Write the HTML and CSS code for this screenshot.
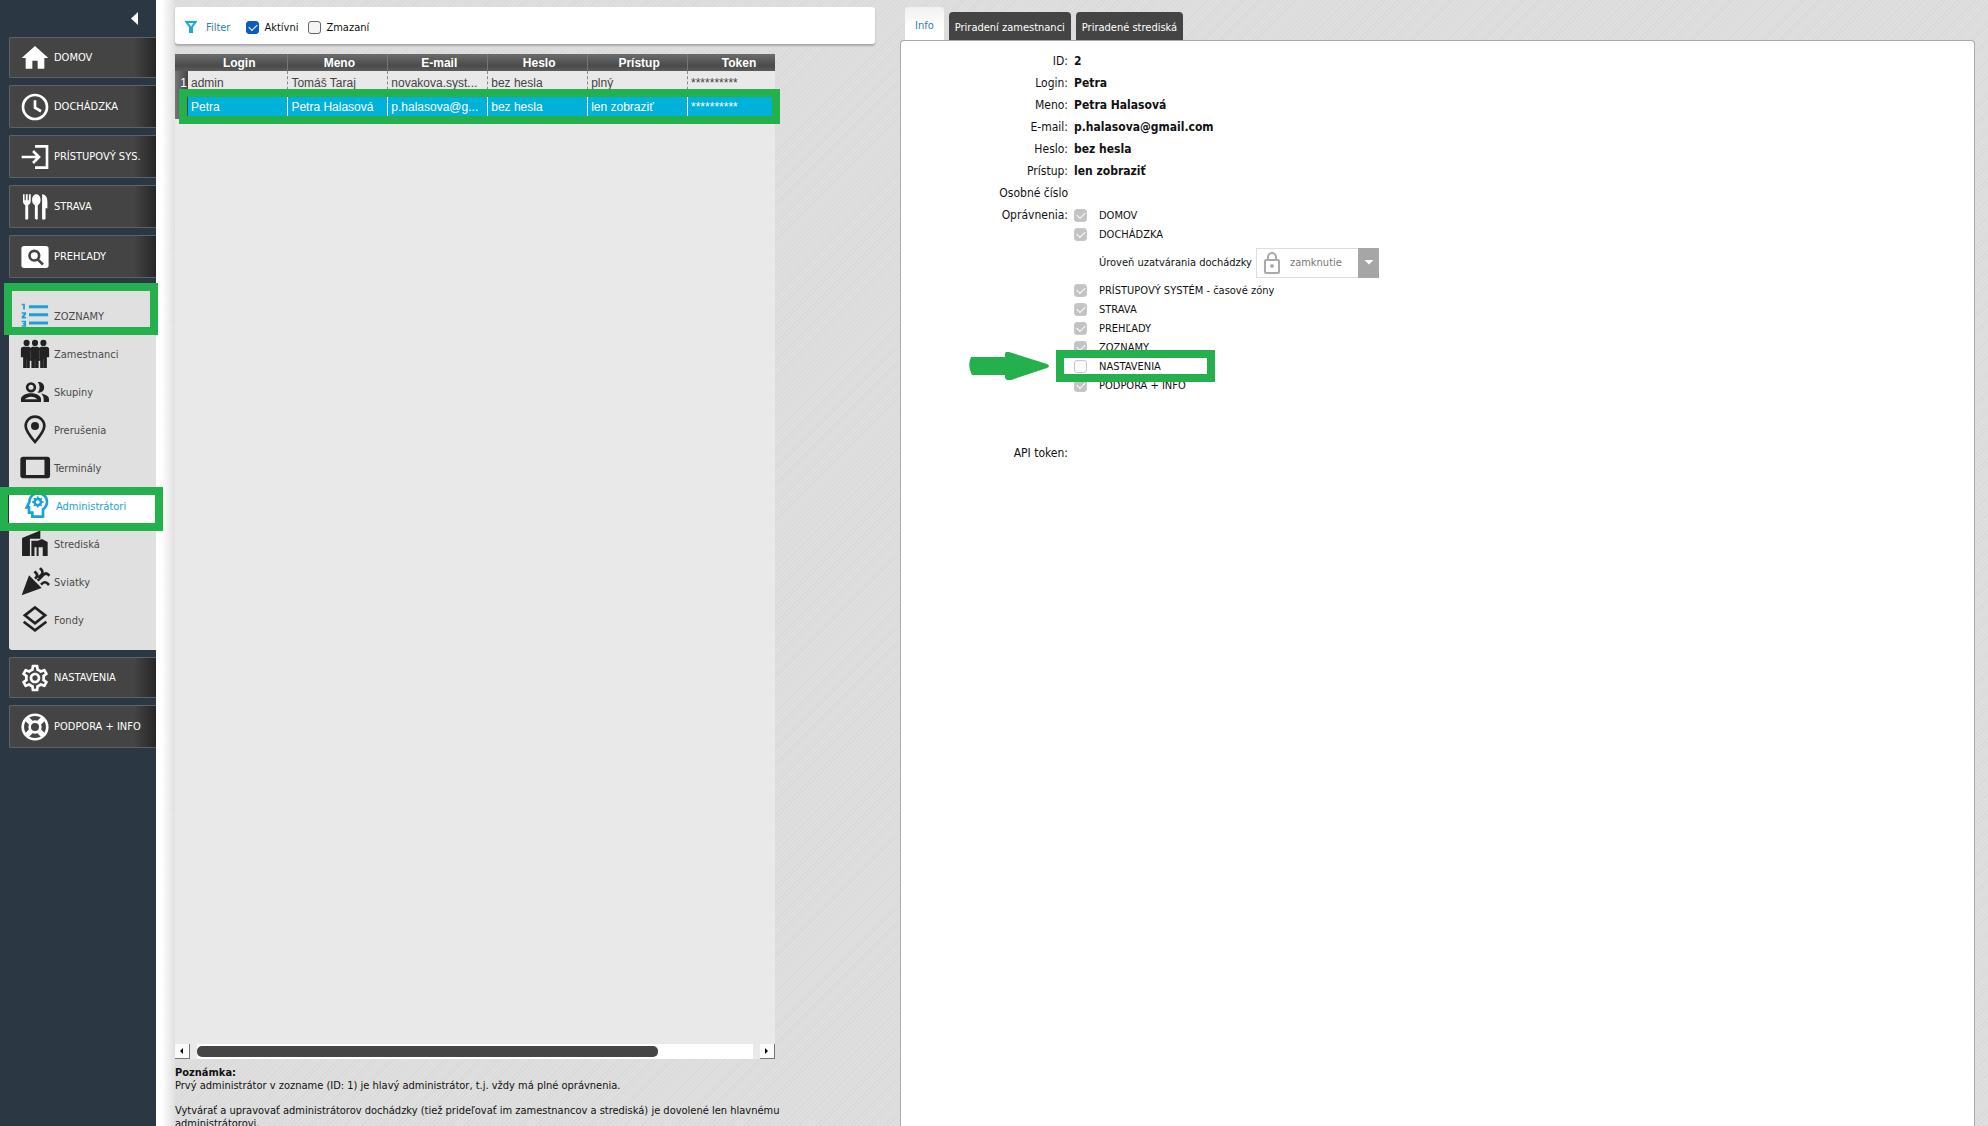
FILE: index.html
```html
<!DOCTYPE html>
<html lang="sk">
<head>
<meta charset="utf-8">
<meta name="viewport" content="width=device-width, initial-scale=1">
<title>Administrátori</title>
<link rel="stylesheet" href="styles.css">
</head>
<body>
<nav class="sidebar">
  <button class="collapse" type="button" aria-label="Skryť menu"></button>
  <a class="nav-item short" href="#"><svg class="icon" viewBox="0 0 24 24"><path d="M10 20v-6h4v6h5v-8h3L12 3 2 12h3v8z"/></svg>DOMOV</a>
  <a class="nav-item" href="#"><svg class="icon line" viewBox="0 0 24 24"><circle cx="12" cy="12" r="9"/><path d="M12 7v5.500l4.500 2.700"/></svg>DOCHÁDZKA</a>
  <a class="nav-item" href="#"><svg class="icon line" viewBox="0 0 24 24"><path d="M12 4h9v16h-9M2 12h12M10.500 7.500 15 12l-4.500 4.500"/></svg>PRÍSTUPOVÝ SYS.</a>
  <a class="nav-item" href="#"><svg class="icon" viewBox="0 0 24 24"><path d="M3 2.500h1.200V7h.9V2.500h1.400V7h.9V2.500h1.400V7.500c0 1.700-.8 2.600-1.900 3v10.200c0 1.200-2.200 1.200-2.200 0V10.500C3.700 10.100 3 9.200 3 7.500zM13 2.500c1.900 0 3.200 1.900 3.200 4.300 0 1.900-.8 3.200-2.100 3.800v10.100c0 1.200-2.200 1.200-2.200 0V10.600c-1.300-.6-2.100-1.900-2.100-3.800 0-2.400 1.300-4.300 3.200-4.300zM17.300 2.500c2.400 0 4 2.100 4 5.500V13h-1.400v7.700c0 1.200-2.600 1.200-2.600 0z"/></svg>STRAVA</a>
  <a class="nav-item" href="#"><svg class="icon" viewBox="0 0 24 24"><rect x="1.800" y="3.800" width="20.400" height="16.400" rx="2"/><g class="cut"><circle cx="11.500" cy="11" r="3.600"/><path d="m14 13.800 4 3.800"/></g></svg>PREHĽADY</a>

  <div class="nav-group">
    <a class="group-head" href="#"><svg class="icon accent" viewBox="0 0 24 24"><path d="M2 2.800h2.400v4.400H3.100V4H2zM2 9.200h3.300v1.500L3.800 12.600h1.500v1.200H2v-1.500L3.700 10.400H2zM2 15.600h3.300v4.400H2v-1.100h1.900v-.6h-1V17.200h1v-.5H2zM7.500 4h14.300v2.200H7.500zM7.500 10h14.300v2.200H7.500zM7.500 16.200h14.300v2.200H7.500z"/></svg>ZOZNAMY<span class="mark mark-group"></span></a>
    <a class="sub-item" href="#"><svg class="icon" viewBox="0 0 24 24"><circle cx="5.700" cy="3.700" r="2.300"/><circle cx="12" cy="3.700" r="2.300"/><circle cx="18.300" cy="3.700" r="2.300"/><path d="M3.300 6.500h4.200l1.200.8 1.200-.8h4.200l1.200.8 1.200-.8h4.200c1.100 0 1.900.8 1.900 1.900v6.100h-1.700v8h-5v-5.500h-1.200v5.500H9.300V17H8.100v5.500h-5v-8H1.400V8.400c0-1.100.8-1.900 1.900-1.900z"/><path class="gap-line" d="M8.700 9v7M15.300 9v7M5.700 16v6.500M12 16v6.500M18.300 16v6.500"/></svg>Zamestnanci</a>
    <a class="sub-item" href="#"><svg class="icon" viewBox="0 0 24 24"><circle class="ring" cx="9" cy="8.500" r="2.900"/><path d="M9 13c-2.700 0-7.500 1.300-7.500 4.300V19.500h15v-2.200C16.500 14.300 11.700 13 9 13zm-4.800 4.500C5 16.600 7 15.500 9 15.500s4 1 4.800 2zM14 4.600c2.300-.7 4.900 1 4.900 3.900s-2.600 4.600-4.900 3.900c1.900-2 1.900-5.800 0-7.800zM16.500 13.200c2.600.5 6 1.700 6 4.100v2.200h-4v-2.200c0-1.700-.8-3.100-2-4.100z"/></svg>Skupiny</a>
    <a class="sub-item" href="#"><svg class="icon" viewBox="0 0 24 24"><path class="ring" d="M12 21c-4-4.700-7-8.500-7-12a7 7 0 0 1 14 0c0 3.500-3 7.300-7 12z"/><circle cx="12" cy="9" r="3"/></svg>Prerušenia</a>
    <a class="sub-item" href="#"><svg class="icon" viewBox="0 0 24 24"><path fill-rule="evenodd" d="M3 3.500h18.500c1.100 0 1.800.8 1.800 1.800v12.500c0 1-.7 1.800-1.800 1.800H3c-1.100 0-2-.8-2-1.800V5.300C1 4.300 1.900 3.500 3 3.500zm2.200 2.300v11.500h13.900V5.800z"/></svg>Terminály</a>
    <a class="sub-item active" href="#"><svg class="icon" viewBox="0 0 24 24"><path class="ring" d="M8.500 20v-3H6v-4H4.300l2-4a6.600 6.600 0 1 1 10.200 5.500V20z"/><circle class="ring" cx="12.600" cy="9" r="2.400"/><path class="ring teeth" d="M12.600 4.600v2M12.600 11.400v2M8.200 9h2M15 9h2M9.500 5.900l1.400 1.400M14.300 10.700l1.400 1.400M9.500 12.100l1.400-1.400M14.300 7.300l1.400-1.400"/></svg>Administrátori<span class="mark mark-active"></span></a>
    <a class="sub-item" href="#"><svg class="icon" viewBox="0 0 24 24"><path d="M2.300 21V7.500L16 1.800V8H8.200v13zM9.300 9.500h4.900l3-1.300 4.300 2.300V21h-3.700v-6.500h-3.100V21h-1.500v-6.500h-1.600V21H9.300z"/></svg>Strediská</a>
    <a class="sub-item" href="#"><svg class="icon" viewBox="0 0 24 24"><path d="m2 22 5.500-15L17 16.500z"/><path class="ring" d="M14 11l4.500-4.500c1-1 2.500-1 3.500 0l.8.800M16.500 14l.8-.8c1.200-1.200 3-1.200 4.200 0l1 1M12 9.500l.8-.8c1-1 1-2.500 0-3.500l-1.200-1.200M14.500 9l2.200-2.200c1.200-1.200 1.200-3 0-4.200l-1-1"/></svg>Sviatky</a>
    <a class="sub-item" href="#"><svg class="icon" viewBox="0 0 24 24"><path class="ring" d="m12 2.600 7.600 5.900L12 14.400 4.400 8.500zM3.500 13.300 12 19.800l8.500-6.500"/></svg>Fondy</a>
  </div>

  <a class="nav-item short" href="#"><svg class="icon" viewBox="0 0 24 24"><path d="M19.430 12.980c.04-.32.07-.64.07-.98 0-.34-.03-.66-.07-.98l2.110-1.650c.19-.15.24-.42.12-.64l-2-3.460c-.09-.16-.26-.25-.44-.25-.06 0-.12.010-.17.030l-2.490 1c-.52-.4-1.080-.73-1.690-.98l-.38-2.650C14.460 2.180 14.250 2 14 2h-4c-.25 0-.46.18-.49.42l-.38 2.650c-.61.25-1.170.59-1.690.98l-2.490-1c-.06-.02-.12-.03-.18-.03-.17 0-.34.09-.43.25l-2 3.460c-.13.22-.07.49.12.64l2.110 1.650c-.04.32-.07.65-.07.98 0 .33.03.66.07.98l-2.110 1.650c-.19.15-.24.42-.12.64l2 3.460c.09.16.26.25.44.25.06 0 .12-.01.17-.03l2.490-1c.52.4 1.080.73 1.690.98l.38 2.650c.03.24.24.42.49.42h4c.25 0 .46-.18.49-.42l.38-2.650c.61-.25 1.170-.59 1.690-.98l2.490 1c.06.02.12.03.18.03.17 0 .34-.09.43-.25l2-3.460c.12-.22.07-.49-.12-.64l-2.110-1.650zm-1.980-1.710c.04.31.05.52.05.73 0 .21-.02.43-.05.73l-.14 1.130.89.7 1.080.84-.7 1.210-1.270-.51-1.040-.42-.9.68c-.43.32-.84.56-1.250.73l-1.060.43-.16 1.130-.2 1.350h-1.400l-.19-1.350-.16-1.130-1.060-.43c-.43-.18-.83-.41-1.230-.71l-.91-.7-1.060.43-1.270.51-.7-1.210 1.080-.84.89-.7-.14-1.130c-.03-.31-.05-.54-.05-.74s.02-.43.05-.73l.14-1.130-.89-.7-1.080-.84.7-1.210 1.270.51 1.040.42.9-.68c.43-.32.84-.56 1.250-.73l1.060-.43.16-1.130.2-1.350h1.390l.19 1.350.16 1.130 1.060.43c.43.18.83.41 1.230.71l.91.7 1.060-.43 1.270-.51.7 1.210-1.070.85-.89.7.14 1.130zM12 8c-2.210 0-4 1.790-4 4s1.790 4 4 4 4-1.790 4-4-1.790-4-4-4zm0 6c-1.100 0-2-.9-2-2s.9-2 2-2 2 .9 2 2-.9 2-2 2z"/></svg>NASTAVENIA</a>
  <a class="nav-item" href="#"><svg class="icon line" viewBox="0 0 24 24"><circle cx="12" cy="12" r="9.200"/><circle cx="12" cy="12" r="4"/><path class="spokes" d="m5.800 5.800 3 3M18.200 5.800l-3 3M5.800 18.200l3-3M18.200 18.200l-3-3"/></svg>PODPORA + INFO</a>
</nav>

<main class="content">
  <section class="list-pane">
    <form class="filter">
      <a class="filter-link" href="#"><svg class="funnel" viewBox="0 0 12 12"><path d="M1.500 1h9L7 5.800V11H5V5.800z"/></svg>Filter</a>
      <label><input class="check" type="checkbox" checked>Aktívni</label>
      <label><input class="check" type="checkbox">Zmazaní</label>
    </form>
    <div class="grid-wrap">
      <div class="grid-scroll">
        <table class="grid">
          <thead><tr><th class="num"></th><th>Login</th><th>Meno</th><th>E-mail</th><th>Heslo</th><th>Prístup</th><th>Token</th></tr></thead>
          <tbody>
            <tr><td class="num">1</td><td>admin</td><td>Tomáš Taraj</td><td>novakova.syst...</td><td>bez hesla</td><td>plný</td><td>**********</td></tr>
            <tr class="selected"><td class="num"></td><td>Petra</td><td>Petra Halasová</td><td>p.halasova@g...</td><td>bez hesla</td><td>len zobraziť</td><td>**********</td></tr>
          </tbody>
        </table>
      </div>
      <span class="mark mark-row"></span>
      <div class="scrollbar">
        <button type="button" class="arrow prev" aria-label="Doľava"></button>
        <div class="track"><div class="thumb"></div></div>
        <button type="button" class="arrow next" aria-label="Doprava"></button>
      </div>
    </div>
    <div class="note">
      <strong>Poznámka:</strong>
      <p>Prvý administrátor v zozname (ID: 1) je hlavý administrátor, t.j. vždy má plné oprávnenia.</p>
      <p>Vytvárať a upravovať administrátorov dochádzky (tiež prideľovať im zamestnancov a strediská) je dovolené len hlavnému administrátorovi.</p>
    </div>
  </section>

  <section class="detail-pane">
    <div class="tabs">
      <button type="button" class="tab current">Info</button>
      <button type="button" class="tab">Priradení zamestnanci</button>
      <button type="button" class="tab">Priradené strediská</button>
    </div>
    <div class="panel">
      <dl class="fields">
        <dt>ID:</dt><dd>2</dd>
        <dt>Login:</dt><dd>Petra</dd>
        <dt>Meno:</dt><dd>Petra Halasová</dd>
        <dt>E-mail:</dt><dd>p.halasova@gmail.com</dd>
        <dt>Heslo:</dt><dd>bez hesla</dd>
        <dt>Prístup:</dt><dd>len zobraziť</dd>
        <dt>Osobné číslo</dt><dd></dd>
        <dt>Oprávnenia:</dt>
        <dd class="rights">
          <label><input class="check" type="checkbox" checked disabled>DOMOV</label>
          <label><input class="check" type="checkbox" checked disabled>DOCHÁDZKA</label>
          <div class="level">
            <label for="level">Úroveň uzatvárania dochádzky</label>
            <div class="select-box">
              <select id="level" disabled><option>zamknutie</option></select>
              <svg class="lock" viewBox="0 0 16 22"><rect x="1" y="8" width="14" height="13" rx="1"/><path d="M4 8V5a4 4 0 0 1 8 0v3"/><circle cx="8" cy="14" r="1"/></svg>
              <span class="drop"></span>
            </div>
          </div>
          <label><input class="check" type="checkbox" checked disabled>PRÍSTUPOVÝ SYSTÉM - časové zóny</label>
          <label><input class="check" type="checkbox" checked disabled>STRAVA</label>
          <label><input class="check" type="checkbox" checked disabled>PREHĽADY</label>
          <label><input class="check" type="checkbox" checked disabled>ZOZNAMY</label>
          <label class="noted"><input class="check" type="checkbox" disabled>NASTAVENIA<svg class="pointer" viewBox="0 0 80 28"><path d="M2 5h34V2q0-3 4-2l38 12q4 2 0 4L42 28q-6 1-6-3v-2H3q-5-9-1-18z"/></svg></label>
          <label><input class="check" type="checkbox" checked disabled>PODPORA + INFO</label>
        </dd>
        <dt>API token:</dt><dd></dd>
      </dl>
    </div>
  </section>
</main>
</body>
</html>
```
FILE: styles.css
```css
*, *::before, *::after { box-sizing: border-box; }

:root {
  --mark: #24b04d;
  --accent: #1ba1d8;
  --ui: Tahoma, "DejaVu Sans Condensed", "Noto Sans", sans-serif;
}

body {
  margin: 0;
  height: 100vh;
  overflow: hidden;
  display: flex;
  font: 11px/13px var(--ui);
  color: #111;
}

a { color: inherit; text-decoration: none; }
button { font: inherit; border: 0; padding: 0; }

/* Sidebar */
.sidebar {
  flex: none;
  width: 156px;
  padding-left: 9px;
  background: #2b3743;
  display: flex;
  flex-direction: column;
  gap: 7px;
}

.collapse {
  align-self: flex-end;
  width: 7px;
  height: 13px;
  margin: 12px 18px 5px 0;
  background: #fff;
  clip-path: polygon(100% 0, 100% 100%, 0 50%);
}

.nav-item {
  display: flex;
  align-items: center;
  gap: 3px;
  height: 43px;
  padding-left: 9px;
  border: 1px solid #5c6267;
  border-right: 0;
  border-radius: 2px 0 0 2px;
  background: linear-gradient(90deg, #444 85%, #262626);
  color: #fff;
  white-space: nowrap;
}

.nav-item.short { height: 41px; }

.icon { flex: none; width: 32px; height: 32px; fill: currentColor; }
.line { fill: none; stroke: currentColor; stroke-width: 2; }
.spokes { stroke-width: 4; }
.cut { fill: none; stroke: #444; stroke-width: 2; }
.ring { fill: none; stroke: currentColor; stroke-width: 2; }
.teeth { stroke-width: 1; }
.gap-line { stroke: #777; stroke-width: 0.3; }

.nav-group {
  padding-bottom: 11px;
  background: #e0e0e0;
  border-radius: 3px 0 0 3px;
}

.group-head, .sub-item {
  position: relative;
  display: flex;
  align-items: center;
  gap: 3px;
  height: 38px;
  padding-left: 10px;
  color: #4a4a4a;
}

.group-head { height: 50px; padding-top: 12px; }
.sub-item .icon { color: #222; }
.icon.accent { color: var(--accent); }
.sub-item.active { padding-left: 12px; background: #fff; color: var(--accent); }
.sub-item.active .icon { color: var(--accent); }

.mark { position: absolute; border: 8px solid var(--mark); z-index: 2; }
.mark-group { left: -5px; right: -2px; top: -2px; bottom: 0; }
.mark-active { left: -9px; right: -7px; top: 0; bottom: -6px; }

/* Content */
.content {
  flex: 1;
  min-width: 0;
  display: flex;
  gap: 25px;
  padding: 7px 13px 0 19px;
  background:
    linear-gradient(90deg, #fff 6px, rgba(255, 255, 255, 0) 20px),
    repeating-linear-gradient(135deg, #dfdfdf 0 2px, #d9d9d9 2px 3px);
}

.list-pane {
  flex: none;
  width: 700px;
  display: flex;
  flex-direction: column;
}

.filter {
  flex: none;
  display: flex;
  align-items: center;
  gap: 10px;
  height: 37px;
  padding: 3px 10px 0;
  background: #fff;
  border-radius: 3px;
  box-shadow: 0 2px 2px #aaa;
}

.filter-link { display: flex; align-items: center; gap: 9px; margin-right: 6px; color: #2e7fa8; }
.funnel { width: 12px; height: 12px; fill: none; stroke: #18aad8; stroke-width: 2; }
.filter label { display: flex; align-items: center; gap: 5px; }

.check {
  appearance: none;
  flex: none;
  display: grid;
  place-items: center;
  width: 13px;
  height: 13px;
  margin: 0;
  border: 1px solid #666;
  border-radius: 3px;
  background: #f4f4f4;
}
.check:checked { background: #0a5db8; border-color: #0a5db8; }
.check:checked::before {
  content: "";
  width: 8px;
  height: 5px;
  border: solid #fff;
  border-width: 0 0 1px 1px;
  transform: translateY(-1px) rotate(-45deg);
}
.check:disabled { border-color: #c8c8c8; background: #fafafa; }
.check:checked:disabled { background: #c3c3c3; }

.grid-wrap {
  position: relative;
  flex: 1;
  width: 600px;
  margin-top: 10px;
  display: flex;
  flex-direction: column;
  background: #e9e9e9;
}

.grid-scroll { flex: 1; overflow: hidden; }

.grid {
  width: 613px;
  table-layout: fixed;
  border-collapse: collapse;
  font: 12px/14px "Liberation Sans", Arial, sans-serif;
  color: #444;
}
.grid th {
  height: 17px;
  padding: 0 0 0 3px;
  background: linear-gradient(#6c6c6c, #4a4a4a 70%, #5c5c5c);
  border-right: 1px solid #777;
  color: #fff;
}
.grid td {
  height: 24px;
  padding: 0 0 0 3px;
  border-left: 1px dashed #888;
  white-space: nowrap;
  overflow: hidden;
}
.grid .num { width: 13px; padding: 0 1px 0 0; border: 0; text-align: right; }
.grid td.num { background: linear-gradient(90deg, #777, #444); color: #fff; }
.grid td.num + td { border-left: 0; }
.grid .selected td:not(.num) { background: #00b1d9; border-left-color: #fff; color: #fff; }
.mark-row { left: 4px; right: -5px; top: 35px; height: 35px; }

.scrollbar { flex: none; display: flex; gap: 7px; height: 15px; }
.arrow { position: relative; width: 15px; background: #fafafa; border: solid #777; border-width: 0 1px 1px 0; }
.arrow::after { content: ""; position: absolute; left: 5px; top: 4px; width: 3px; height: 6px; background: #000; }
.prev::after { clip-path: polygon(100% 0, 100% 100%, 0 50%); }
.next::after { clip-path: polygon(0 0, 0 100%, 100% 50%); }
.track { flex: 1; background: #fff; padding: 2px 0; }
.thumb { width: 83%; height: 11px; border-radius: 5px; background: #454545; }

.note { flex: none; width: 620px; height: 67px; padding-top: 7px; }
.note p { margin: 0 0 12px; }

/* Detail */
.detail-pane { flex: 1; min-width: 0; display: flex; flex-direction: column; }

.tabs { flex: none; display: flex; align-items: flex-end; gap: 5px; height: 33px; padding-left: 5px; }
.tab {
  height: 28px;
  padding: 2px 6px 0;
  border-radius: 4px 4px 0 0;
  background: #444;
  color: #fff;
  white-space: nowrap;
}
.tab.current { height: 33px; padding: 4px 10px 0; background: linear-gradient(#f0f0f0, #fff 60%); color: #2e7fa8; }

.panel {
  flex: 1;
  padding-top: 9px;
  background: #fff;
  border: 1px solid #aaa;
  border-bottom: 0;
  border-radius: 4px 4px 0 0;
}

.fields {
  display: grid;
  grid-template-columns: 167px 1fr;
  column-gap: 6px;
  margin: 0;
  font-size: 12px;
  line-height: 22px;
}
.fields dt { text-align: right; }
.fields dd { margin: 0; font-weight: bold; }
.fields .rights { padding: 2px 0 47px; font-size: 11px; font-weight: normal; line-height: 19px; }
.rights > label { display: flex; align-items: center; gap: 12px; width: max-content; height: 19px; }
.level { display: flex; align-items: center; gap: 4px; height: 37px; padding-left: 25px; }

.select-box { position: relative; width: 123px; height: 30px; }
.select-box select {
  appearance: none;
  width: 100%;
  height: 100%;
  padding: 0 22px 0 33px;
  border: 1px solid #ddd;
  border-radius: 0;
  background: #fff;
  font: inherit;
  color: #777;
  opacity: 1;
}
.lock { position: absolute; left: 8px; top: 4px; width: 16px; height: 22px; fill: none; stroke: #aaa; stroke-width: 2; }
.drop { position: absolute; right: 0; top: 0; width: 21px; height: 100%; background: #a6a6a6; }
.drop::after {
  content: "";
  position: absolute;
  left: 6px;
  top: 12px;
  width: 10px;
  height: 5px;
  background: #fff;
  clip-path: polygon(0 0, 100% 0, 50% 100%);
}

.rights > .noted { position: relative; }
.noted::after {
  content: "";
  position: absolute;
  left: -18px;
  top: -7px;
  width: 159px;
  height: 32px;
  border: 8px solid var(--mark);
}
.pointer { position: absolute; left: -105px; top: -5px; width: 80px; height: 28px; fill: var(--mark); }
```
